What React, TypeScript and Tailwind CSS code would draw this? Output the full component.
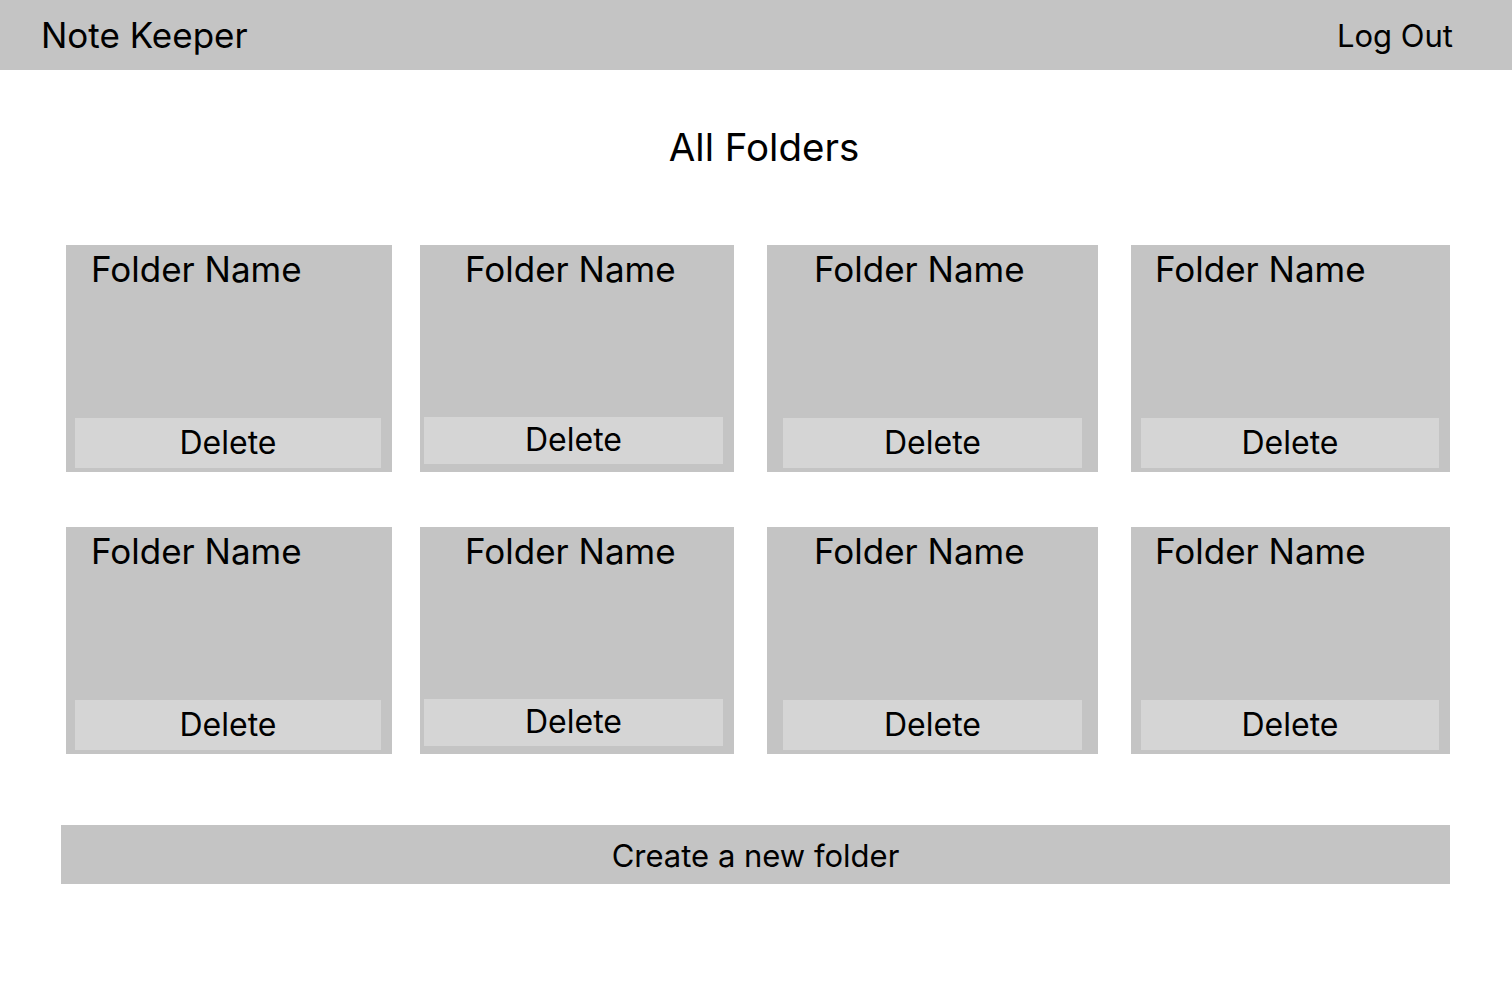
import React from 'react'

const folders = [
  { w: 'w-[326px]', pad: 'pl-[25px]', btn: 'ml-[9px] mr-[11px] h-[50px]', gap: '' },
  { w: 'w-[314px]', pad: 'pl-[45px]', btn: 'ml-[4px] mr-[11px] h-[47px] mb-[4px]', gap: 'ml-[28px]' },
  { w: 'w-[331px]', pad: 'pl-[47px]', btn: 'mx-[16px] h-[50px]', gap: 'ml-[33px]' },
  { w: 'w-[319px]', pad: 'pl-[24px]', btn: 'ml-[10px] mr-[11px] h-[50px]', gap: 'ml-[33px]' },
]

function FolderCard({ f }: { f: (typeof folders)[number] }) {
  return (
    <div className={`${f.w} ${f.gap} h-[227px] bg-[#c4c4c4] flex flex-col justify-between pb-[4px]`}>
      <div className={`${f.pad} pt-[7px] text-[35px] leading-none text-black`}>Folder Name</div>
      <button className={`${f.btn} bg-[#d5d5d5] text-[32px] leading-none text-black`}>Delete</button>
    </div>
  )
}

export default function App() {
  return (
    <div className="min-h-screen bg-white font-['Inter',sans-serif] text-black">
      <header className="flex items-center justify-between h-[70px] bg-[#c4c4c4] pl-[41px] pr-[59px]">
        <h1 className="text-[35px] leading-none">Note Keeper</h1>
        <button className="text-[31px] leading-none">Log Out</button>
      </header>
      <h2 className="text-center text-[38.5px] leading-none mt-[58px] pl-[16px]">All Folders</h2>
      <div className="pl-[66px] mt-[78px] flex flex-col gap-[55px]">
        <div className="flex">
          {folders.map((f, i) => (
            <FolderCard key={i} f={f} />
          ))}
        </div>
        <div className="flex">
          {folders.map((f, i) => (
            <FolderCard key={i} f={f} />
          ))}
        </div>
      </div>
      <div className="pl-[61px] pr-[62px] mt-[71px]">
        <button className="w-full h-[59px] bg-[#c4c4c4] text-[31px] leading-none pt-[2px]">Create a new folder</button>
      </div>
    </div>
  )
}
